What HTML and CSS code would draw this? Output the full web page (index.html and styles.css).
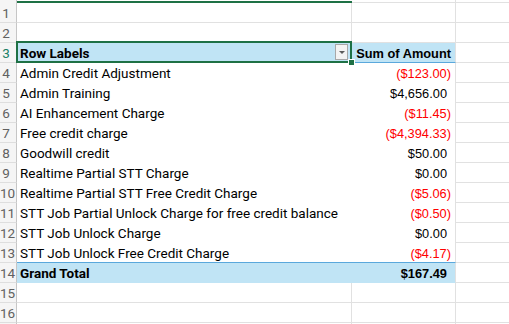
FILE: index.html
```html
<!DOCTYPE html>
<html>
<head>
<meta charset="utf-8">
<link rel="stylesheet" href="styles.css">
</head>
<body>
<div class="sheet">
  <div class="rh top"></div><div class="c b top-sel"></div><div class="c cc"></div><div class="c d"></div>

  <div class="rh">1</div><div class="c b"></div><div class="c cc"></div><div class="c d"></div>
  <div class="rh">2</div><div class="c b"></div><div class="c cc"></div><div class="c d"></div>

  <div class="rh sel">3</div>
  <div class="c b hdr lbl bold selcell">Row Labels
    <span class="dd"><span class="tri"></span></span>
    <span class="selbox"><span class="handle"></span></span>
  </div>
  <div class="c cc hdr num bold">Sum of Amount</div>
  <div class="c d"></div>

  <div class="rh">4</div><div class="c b pv lbl">Admin Credit Adjustment</div><div class="c cc pv num neg">($123.00)</div><div class="c d"></div>
  <div class="rh">5</div><div class="c b pv lbl">Admin Training</div><div class="c cc pv num pos">$4,656.00</div><div class="c d"></div>
  <div class="rh">6</div><div class="c b pv lbl">AI Enhancement Charge</div><div class="c cc pv num neg">($11.45)</div><div class="c d"></div>
  <div class="rh">7</div><div class="c b pv lbl">Free credit charge</div><div class="c cc pv num neg">($4,394.33)</div><div class="c d"></div>
  <div class="rh">8</div><div class="c b pv lbl">Goodwill credit</div><div class="c cc pv num pos">$50.00</div><div class="c d"></div>
  <div class="rh">9</div><div class="c b pv lbl">Realtime Partial STT Charge</div><div class="c cc pv num pos">$0.00</div><div class="c d"></div>
  <div class="rh">10</div><div class="c b pv lbl">Realtime Partial STT Free Credit Charge</div><div class="c cc pv num neg">($5.06)</div><div class="c d"></div>
  <div class="rh">11</div><div class="c b pv lbl">STT Job Partial Unlock Charge for free credit balance</div><div class="c cc pv num neg">($0.50)</div><div class="c d"></div>
  <div class="rh">12</div><div class="c b pv lbl">STT Job Unlock Charge</div><div class="c cc pv num pos">$0.00</div><div class="c d"></div>
  <div class="rh">13</div><div class="c b pv lbl last">STT Job Unlock Free Credit Charge</div><div class="c cc pv num neg last">($4.17)</div><div class="c d"></div>

  <div class="rh">14</div><div class="c b tot lbl bold">Grand Total</div><div class="c cc tot num pos bold">$167.49</div><div class="c d"></div>

  <div class="rh">15</div><div class="c b"></div><div class="c cc"></div><div class="c d"></div>
  <div class="rh">16</div><div class="c b"></div><div class="c cc"></div><div class="c d"></div>
  <div class="rh"></div><div class="c b"></div><div class="c cc"></div><div class="c d"></div>
</div>
</body>
</html>
```
FILE: styles.css
```css
html, body {
  margin: 0;
  padding: 0;
  background: #ffffff;
  overflow: hidden;
}

.sheet {
  display: grid;
  grid-template-columns: 17px 335px 104px 53px;
  grid-template-rows: 3px repeat(16, 20px) 20px;
  width: 509px;
  height: 324px;
  overflow: hidden;
}

.rh {
  box-sizing: border-box;
  background: #f5f5f5;
  border-right: 1px solid #c6c6c6;
  border-bottom: 1px solid #dedede;
  color: #616161;
  font-family: Roboto, "Liberation Sans", Arial, sans-serif;
  font-size: 13.5px;
  line-height: 19px;
  padding-top: 1px;
  text-align: center;
  padding-right: 4px;
}

.rh.top {
  border-bottom: none;
  padding-top: 0;
}

.rh.sel {
  color: #1a7f64;
}

.c {
  box-sizing: border-box;
  border-right: 1px solid #e1e1e1;
  border-bottom: 1px solid #e1e1e1;
  white-space: nowrap;
  overflow: visible;
  color: #000000;
}

.d {
  border-right: none;
}

.top-sel {
  border-bottom: 2px solid #1e7145;
  border-right: none;
}

.lbl {
  font-family: Roboto, "Liberation Sans", Arial, sans-serif;
  font-size: 13.5px;
  line-height: 19px;
  padding: 1px 0 0 3px;
}

.num {
  font-family: "Liberation Sans", Arial, sans-serif;
  font-size: 12.8px;
  line-height: 19px;
  padding: 1px 4px 0 0;
  text-align: right;
}

.num.pos {
  padding-right: 8px;
}

.neg {
  color: #ff0000;
}

.bold {
  font-weight: bold;
}

.hdr {
  background: #c0e4f5;
  border-bottom: 1px solid #5aa8dc;
}

.hdr.b {
  border-right: none;
}

.pv {
  border-bottom: none;
}

.pv.b {
  border-right: none;
}

.pv.last {
  border-bottom: 1px solid #5aa8dc;
}

.tot {
  background: #c0e4f5;
  border-bottom: 1px solid #c0e4f5;
}

.tot.b {
  border-right: none;
}

.selcell {
  position: relative;
}

.dd {
  position: absolute;
  right: 4px;
  top: 1px;
  width: 13px;
  height: 16px;
  box-sizing: border-box;
  border: 1px solid #a8a8a8;
  background: #f3f3f3;
  display: flex;
  align-items: center;
  justify-content: center;
}

.tri {
  width: 0;
  height: 0;
  border-left: 3px solid transparent;
  border-right: 3px solid transparent;
  border-top: 3px solid #5b5b5b;
}

.selbox {
  position: absolute;
  left: -1px;
  top: -2px;
  right: 0;
  bottom: -1px;
  border: 2px solid #1e7145;
  pointer-events: none;
}

.handle {
  position: absolute;
  right: -5px;
  bottom: -5px;
  width: 5px;
  height: 5px;
  background: #1e7145;
  border: 1px solid #ffffff;
}
```
